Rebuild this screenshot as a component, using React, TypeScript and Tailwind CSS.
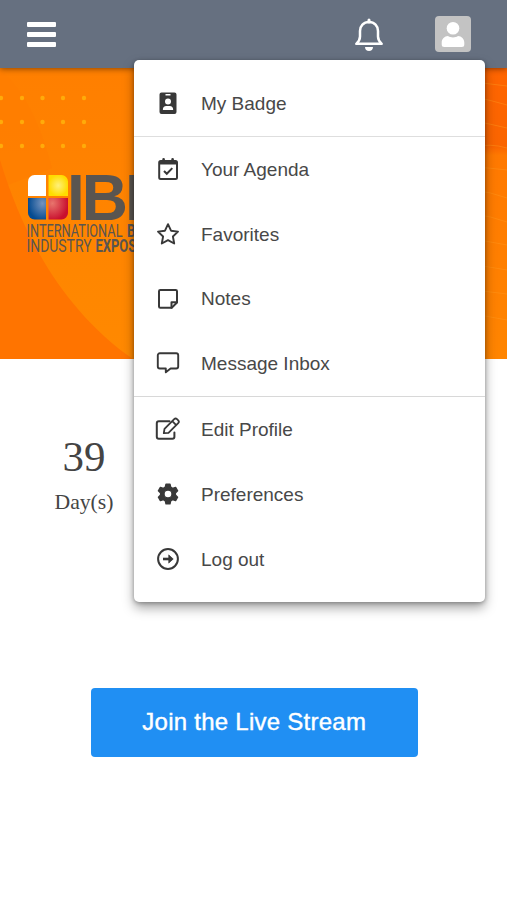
import type { ReactNode } from 'react';

type MenuItem = { label: string; icon: ReactNode };

function Icon({ children }: { children: ReactNode }) {
  return (
    <svg
      className="h-6 w-6.5 shrink-0"
      viewBox="0 0 26 24"
      fill="none"
      stroke="currentColor"
      strokeWidth="2"
      strokeLinejoin="round"
      strokeLinecap="round"
    >
      {children}
    </svg>
  );
}

const badge: MenuItem[] = [
  {
    label: 'My Badge',
    icon: (
      <Icon>
        <path
          fill="currentColor"
          stroke="none"
          fillRule="evenodd"
          d="M6.500 1.400h13a2 2 0 0 1 2 2v17.500a2 2 0 0 1-2 2h-13a2 2 0 0 1-2-2V3.400a2 2 0 0 1 2-2zM10.500 3.100v1.500h5V3.100zM13 7.600a3 3 0 1 0 0 6 3 3 0 0 0 0-6zM11.300 14.900c-2.200 0-3.400 1.500-3.400 3.200v.8h10.200v-.8c0-1.700-1.200-3.200-3.400-3.200z"
        />
      </Icon>
    ),
  },
];

const activity: MenuItem[] = [
  {
    label: 'Your Agenda',
    icon: (
      <Icon>
        <rect x="4.200" y="4" width="17.800" height="18" rx="1.500" />
        <path d="M4 4h18v3.500H4z" fill="currentColor" stroke="none" />
        <path d="M8.600 2.200v3M17.600 2.200v3" strokeWidth="2.600" />
        <path d="M9 14l2.800 2.800 5.500-5.700" strokeLinecap="butt" strokeLinejoin="miter" />
      </Icon>
    ),
  },
  {
    label: 'Favorites',
    icon: (
      <Icon>
        <path d="M13 2.200l3 6.500 7 .9-5.100 4.900 1.300 7L13 18.100l-6.200 3.400 1.300-7L3 9.600l7-.9z" strokeWidth="1.900" />
      </Icon>
    ),
  },
  {
    label: 'Notes',
    icon: (
      <Icon>
        <path d="M5.300 3h15.400a1.300 1.300 0 0 1 1.300 1.300v11.200L16.700 20.800H5.300A1.300 1.300 0 0 1 4 19.500V4.300A1.300 1.300 0 0 1 5.300 3z" />
        <path d="M22 15.200h-5.500v5.600" />
      </Icon>
    ),
  },
  {
    label: 'Message Inbox',
    icon: (
      <Icon>
        <path d="M4.800 2.300h16.400a2 2 0 0 1 2 2v11.200a2 2 0 0 1-2 2h-5.600l-4.800 3.800v-3.800h-6a2 2 0 0 1-2-2V4.300a2 2 0 0 1 2-2z" strokeWidth="1.900" />
      </Icon>
    ),
  },
];

const account: MenuItem[] = [
  {
    label: 'Edit Profile',
    icon: (
      <Icon>
        <path d="M14.500 4.200H3.800a2 2 0 0 0-2 2v13.600a2 2 0 0 0 2 2h13.600a2 2 0 0 0 2-2v-4.300" />
        <path d="M8.800 16.200l.7-4.300 9.700-9.700a2 2 0 0 1 2.800 0l1.200 1.200a2 2 0 0 1 0 2.800l-9.700 9.700zM17.300 4.200l3.900 3.900" strokeWidth="1.800" />
      </Icon>
    ),
  },
  {
    label: 'Preferences',
    icon: (
      <Icon>
        <path
          fill="currentColor"
          fillRule="evenodd"
          strokeWidth="1.400"
          d="M11 2.200h4l.7 3 1.900 1.100 3-.9 2 3.400-2.200 2.100v2.200l2.200 2.100-2 3.400-3-.9-1.900 1.100-.7 3h-4l-.7-3-1.900-1.100-3 .9-2-3.400 2.200-2.100v-2.200L3.400 8.800l2-3.400 3 .9 1.900-1.100zM13 8a4 4 0 1 0 0 8 4 4 0 0 0 0-8z"
        />
      </Icon>
    ),
  },
  {
    label: 'Log out',
    icon: (
      <Icon>
        <circle cx="13" cy="12" r="9.900" />
        <path d="M8 12h7" strokeWidth="2.600" strokeLinecap="butt" />
        <path d="M14 8.200l4.200 3.800-4.200 3.800z" fill="currentColor" strokeWidth=".8" />
      </Icon>
    ),
  },
];

function MenuGroup({ items }: { items: MenuItem[] }) {
  return (
    <ul>
      {items.map((item) => (
        <li key={item.label}>
          <button className="flex h-[64.8px] w-full items-center gap-[20px] pl-[21px] text-left text-[19px] text-[#484848]">
            <span className="text-[#383838]">{item.icon}</span>
            <span className="pt-[2px]">{item.label}</span>
          </button>
        </li>
      ))}
    </ul>
  );
}

function UserMenu() {
  return (
    <nav className="absolute top-[60px] right-[22px] z-20 w-[351px] rounded-[5px] bg-white py-[10.800px] shadow-[0_6px_12px_rgba(0,0,0,0.35),0_1px_4px_rgba(0,0,0,0.3)]">
      <MenuGroup items={badge} />
      <hr className="h-px border-0 bg-[#dedede]" />
      <MenuGroup items={activity} />
      <hr className="h-px border-0 bg-[#d8d8d8]" />
      <MenuGroup items={account} />
    </nav>
  );
}

function TopBar() {
  return (
    <header className="relative z-10 flex h-[68px] items-center justify-between bg-[#667080] pr-9 pl-[27px] shadow-[0_1px_6px_rgba(0,0,0,0.45)]">
      <button aria-label="Menu" className="flex w-[29px] flex-col gap-[5px]">
        <span className="h-[5px] rounded-[1px] bg-white" />
        <span className="h-[5px] rounded-[1px] bg-white" />
        <span className="h-[5px] rounded-[1px] bg-white" />
      </button>
      <div className="flex items-center gap-[51px]">
        <button aria-label="Notifications" className="pt-[2px]">
          <svg className="h-[34px] w-[30px]" viewBox="0 0 30 34" fill="none" stroke="#fff" strokeWidth="2.500" strokeLinejoin="round">
            <path d="M15 2v2" strokeWidth="3" strokeLinecap="round" />
            <path d="M15 4C9.500 4 6 8 6 13v5.500c0 3.200-1.200 5-3.700 7.300h25.400C25.200 23.500 24 21.700 24 18.500V13c0-5-3.500-9-9-9z" />
            <path d="M11 29h8c0 2.500-1.700 4-4 4s-4-1.500-4-4z" fill="#fff" stroke="none" />
          </svg>
        </button>
        <button aria-label="Account" className="h-[36px] w-[36px] rounded-[4px] bg-[#c3c3c3]">
          <svg viewBox="0 0 36 36" fill="#fff">
            <circle cx="18" cy="12.300" r="6.300" />
            <path d="M13 20c1.500 1 3 1.400 5 1.400s3.500-.4 5-1.400c3.500.3 6.300 2.800 6.300 6.500v2a2.500 2.500 0 0 1-2.500 2.500H9.200a2.500 2.500 0 0 1-2.500-2.500v-2C6.700 22.800 9.500 20.300 13 20z" />
          </svg>
        </button>
      </div>
    </header>
  );
}

const dotColumns = [1, 22, 42.500, 63, 84];
const dotRows = [30, 54, 78];

function Banner() {
  return (
    <section className="h-[291px] overflow-hidden bg-[#ff8200]">
      <svg className="block h-[291px] w-full" viewBox="0 0 507 291">
        <defs>
          <linearGradient id="base" x1="0" y1="0" x2="0" y2="1">
            <stop offset="0" stopColor="#ff7f00" />
            <stop offset="1" stopColor="#ff8900" />
          </linearGradient>
          <linearGradient id="right" x1="0" y1="0" x2="0" y2="1">
            <stop offset="0" stopColor="#ff6500" />
            <stop offset=".27" stopColor="#fa6500" />
            <stop offset=".3" stopColor="#ff7900" />
            <stop offset="1" stopColor="#ff8500" />
          </linearGradient>
          <radialGradient id="yellow">
            <stop offset="0" stopColor="#fff07a" />
            <stop offset="1" stopColor="#ffdc00" />
          </radialGradient>
          <radialGradient id="blue" cx=".8" cy=".25" r=".8">
            <stop offset="0" stopColor="#7593be" />
            <stop offset="1" stopColor="#044b91" />
          </radialGradient>
          <radialGradient id="red" cx=".2" cy=".25" r=".8">
            <stop offset="0" stopColor="#e8756d" />
            <stop offset="1" stopColor="#c90f2e" />
          </radialGradient>
        </defs>
        <path d="M0 0h507v291H0z" fill="url(#base)" />
        <path d="M0 2C25 22 40 55 52 100L0 120z" fill="#ff7d00" fillOpacity=".7" />
        <path d="M0 92C22 165 62 242 133 291H0z" fill="#ff7400" />
        <path d="M460 0h47v291h-47z" fill="url(#right)" />
        <path
          d="M475 14q15 2 32 4M475 29q15 3 32 8M475 53q15 3 32 7M475 79q15-4 32 1M475 99q15 1 32 3M475 122q15 2 32 8M475 146q15 2 32 8M475 171q15 3 32 6M475 197q15 2 32 5M475 222q15 2 32 4M475 246q15 3 32 6"
          stroke="#ff9a1e"
          strokeOpacity=".45"
          fill="none"
        />
        {dotRows.map((y) =>
          dotColumns.map((x) => <circle key={`${x}-${y}`} cx={x} cy={y} r="2.200" fill="#ffab0a" />)
        )}
        <g>
          <path d="M34.500 107H46v21H28v-14.500a6.500 6.500 0 0 1 6.500-6.500z" fill="#fff" />
          <path d="M48.500 107h13a6.500 6.500 0 0 1 6.500 6.500V128H48.500z" fill="url(#yellow)" />
          <path d="M28 130h18v21.500H34.500a6.500 6.500 0 0 1-6.500-6.500z" fill="url(#blue)" />
          <path d="M48.500 130H68v15a6.500 6.500 0 0 1-6.500 6.500h-13z" fill="url(#red)" />
        </g>
        <g fill="#5a5550" fontFamily="Liberation Sans, sans-serif">
          <text x="67" y="151.500" fontSize="64" fontWeight="700" letterSpacing="-3">IBIE</text>
          <g fontFamily="Roboto, sans-serif" fontSize="17.500">
            <text x="26.500" y="168.500" textLength="96" lengthAdjust="spacingAndGlyphs">INTERNATIONAL</text>
            <text x="127" y="168.500" fontWeight="700" textLength="48" lengthAdjust="spacingAndGlyphs">BAKING</text>
            <text x="26.500" y="184" textLength="65" lengthAdjust="spacingAndGlyphs">INDUSTRY</text>
            <text x="95.500" y="184" fontWeight="700" textLength="74" lengthAdjust="spacingAndGlyphs">EXPOSITION</text>
          </g>
        </g>
      </svg>
    </section>
  );
}

export default function App() {
  return (
    <div className="relative flex h-[900px] flex-col overflow-hidden bg-white font-['Liberation_Sans',Arial,sans-serif]">
      <TopBar />
      <Banner />
      <UserMenu />
      <section className="flex h-[329px] flex-col items-start pt-[73px] pl-[54px] font-['Liberation_Serif',serif]">
        <div className="flex w-[60px] flex-col items-center text-[#444]">
          <span className="text-[43px] leading-[50px]">39</span>
          <span className="mt-[8px] text-[21.700px] leading-6">Day(s)</span>
        </div>
      </section>
      <button className="ml-[91px] h-[69px] w-[326.500px] rounded-[4px] bg-[#208ff3] pb-[2px] text-[24px] tracking-[0.25px] text-white [-webkit-text-stroke:0.4px_white]">
        Join the Live Stream
      </button>
    </div>
  );
}
